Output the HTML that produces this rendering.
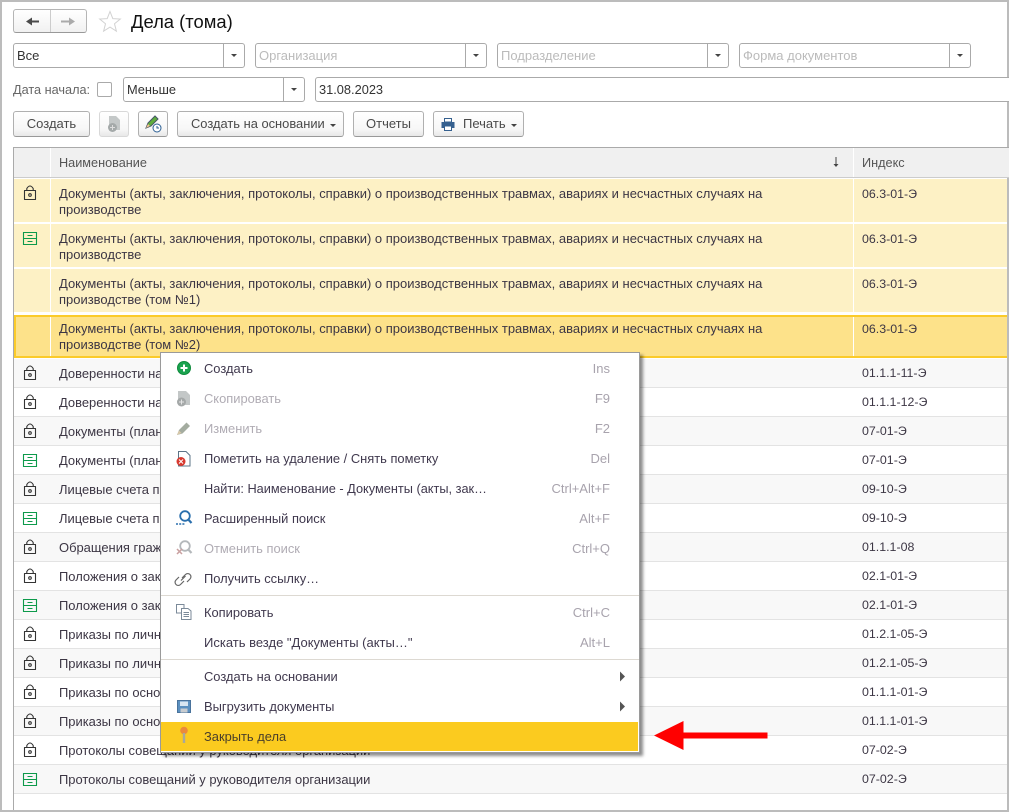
<!DOCTYPE html>
<html><head><meta charset="utf-8"><style>
html,body{margin:0;padding:0;width:1009px;height:812px;overflow:hidden;background:#fff}
body{font:13px/15px "Liberation Sans",sans-serif;color:#3c3644;position:relative}
.a{position:absolute}
.t{position:absolute;white-space:nowrap}
.fld{position:absolute;height:25px;border:1px solid #aaa;border-radius:3px;box-sizing:border-box;background:#fff}
.fld span{position:absolute;left:3px;top:4px;white-space:nowrap;color:#333}
.fld span.ph{color:#bbb}
.fld i{position:absolute;right:0;top:0;bottom:0;width:20px;border-left:1px solid #aaa}
.fld i:after,.dd:after{content:"";position:absolute;left:7px;top:10px;border:3px solid transparent;border-top:3px solid #444;border-bottom:0}
.btn{position:absolute;top:111px;height:26px;box-sizing:border-box;border:1px solid #b0b0b0;border-bottom-color:#999;border-radius:3px;background:linear-gradient(#fff,#f7f7f7 70%,#e8e8e8);text-align:center;line-height:24px;color:#4a4a4a;white-space:nowrap}
.dd{position:relative;display:inline-block;width:6px;height:6px;margin-left:5px}
.dd:after{left:0;top:2px}
.r{position:absolute;left:14px;width:993px;border-bottom:1px solid #e3e3e3;box-sizing:content-box}
.r u{position:absolute;left:45px;top:7px;text-decoration:none;white-space:nowrap;color:#3c3644;font-size:12.95px}
.r b{position:absolute;left:848px;top:7px;font-weight:normal;white-space:nowrap;color:#3c3644;font-size:12.4px}
.y{background:#fdf1c5;border-bottom:0;height:43px}
.y:before,.y:after{content:"";position:absolute;top:0;bottom:0;width:1px;background:#fff}
.y:before{left:36px}.y:after{left:839px}
.y u,.y b{top:7px;line-height:16px}
.y u{font-size:12.99px}
.s:before{left:34px}.s:after{left:837px}
.odd{background:#f8f8f8}
.m{position:absolute;left:204px;white-space:nowrap;color:#40394e;font-size:12.9px}
.k{position:absolute;right:399px;white-space:nowrap;color:#a8a3ad}
.dis{color:#b0acb4}
</style></head><body>
<div class="a" style="left:0;top:0;width:1009px;height:2px;background:#bcbcbc"></div>
<div class="a" style="left:0;top:0;width:2px;height:812px;background:#bcbcbc"></div>
<div class="a" style="left:1007px;top:0;width:2px;height:812px;background:#bcbcbc"></div>
<div class="a" style="left:0;top:810px;width:1009px;height:2px;background:#bcbcbc"></div>

<div class="a" style="left:13px;top:9px;width:74px;height:24px;box-sizing:border-box;border:1px solid #b5b5b5;border-bottom-color:#999;border-radius:3px;background:linear-gradient(#fff,#f1f1f1)"><div class="a" style="left:36px;top:0;width:1px;height:22px;background:#ccc"></div></div>
<svg class="a" style="left:24px;top:14px" width="60" height="14"><path d="M4 7.500H15" stroke="#4a4a4a" stroke-width="2"/><path d="M2 7.500L8 3.500V11.500Z" fill="#4a4a4a"/><path d="M37 7.500H48" stroke="#aaa" stroke-width="2"/><path d="M51 7.500L45 3.500V11.500Z" fill="#aaa"/></svg>
<svg class="a" style="left:98px;top:10px" width="24" height="23"><path d="M12 1.500L14.800 8.600L22.300 9L16.500 13.800L18.400 21.200L12 17.100L5.600 21.200L7.500 13.800L1.700 9L9.200 8.600Z" fill="#fff" stroke="#d2d2d2"/></svg>
<div class="t" style="left:131px;top:11px;font-size:18.4px;line-height:22px;color:#111">Дела (тома)</div>

<div class="fld" style="left:13px;top:43px;width:232px"><span>Все</span><i></i></div>
<div class="fld" style="left:255px;top:43px;width:232px"><span class="ph">Организация</span><i></i></div>
<div class="fld" style="left:497px;top:43px;width:232px"><span class="ph">Подразделение</span><i></i></div>
<div class="fld" style="left:739px;top:43px;width:232px"><span class="ph">Форма документов</span><i></i></div>
<div class="t" style="left:13px;top:83px;color:#666;font-size:12.7px">Дата начала:</div>
<div class="a" style="left:97px;top:82px;width:15px;height:15px;box-sizing:border-box;border:1px solid #aaa;border-radius:2px"></div>
<div class="fld" style="left:123px;top:77px;width:182px"><span style="font-size:12.8px">Меньше</span><i></i></div>
<div class="fld" style="left:315px;top:77px;width:700px"><span style="font-size:12.8px">31.08.2023</span></div>

<div class="btn" style="left:13px;width:77px">Создать</div>
<div class="btn" style="left:99px;width:30px;border-color:#d8d8d8"></div>
<svg class="a" style="left:106px;top:115px" width="17" height="18"><path d="M3 1H10L14 5V15H3Z" fill="#c4c8c8"/><circle cx="6.500" cy="12.500" r="4.500" fill="#a4a9a9"/><path d="M4 12.500H9M6.500 10V15" stroke="#ddd"/></svg>
<div class="btn" style="left:138px;width:30px"></div>
<svg class="a" style="left:144px;top:115px" width="18" height="18"><path d="M2 13L4 8L11 1L14 4L7 11Z" fill="#5fae3d" stroke="#456"/><path d="M2 13L4 9L6 11Z" fill="#f2c48d"/><circle cx="13" cy="13" r="4" fill="#fff" stroke="#2c5f94"/><path d="M13 11V13H15" stroke="#2c5f94" fill="none"/></svg>
<div class="btn" style="left:177px;width:167px;text-align:left;padding-left:13px;font-size:12.9px">Создать на основании<span class="dd"></span></div>
<div class="btn" style="left:353px;width:71px">Отчеты</div>
<div class="btn" style="left:433px;width:91px;text-align:left;padding-left:29px">Печать<span class="dd"></span></div>
<svg class="a" style="left:441px;top:117px" width="15" height="15"><path d="M3.500 1.500H10.500V5H3.500Z" fill="#fff" stroke="#35608f"/><path d="M0.500 5H13.500V11H0.500Z" fill="#35608f"/><path d="M3.500 9H10.500V13.500H3.500Z" fill="#fff" stroke="#35608f"/></svg>

<div class="a" style="left:13px;top:147px;width:996px;height:31px;box-sizing:border-box;border-top:1px solid #aaa;border-bottom:1px solid #ccc;background:#f0f0f0"></div>
<div class="a" style="left:13px;top:147px;width:1px;height:663px;background:#aaa"></div>
<div class="a" style="left:50px;top:148px;width:1px;height:29px;background:#fff"></div>
<div class="a" style="left:853px;top:148px;width:1px;height:29px;background:#fff"></div>
<div class="t" style="left:59px;top:156px;color:#555;font-size:12.7px">Наименование</div>
<div class="t" style="left:862px;top:156px;color:#555;font-size:12.7px">Индекс</div>
<svg class="a" style="left:832px;top:157px" width="8" height="11"><path d="M4 0V9" stroke="#444"/><path d="M1.500 7L4 10L6.500 7Z" fill="#444"/></svg>

<div class="r y" style="top:179px"><u>Документы (акты, заключения, протоколы, справки) о производственных травмах, авариях и несчастных случаях на<br>производстве</u><b>06.3-01-Э</b></div>
<div class="r y" style="top:224px"><u>Документы (акты, заключения, протоколы, справки) о производственных травмах, авариях и несчастных случаях на<br>производстве</u><b>06.3-01-Э</b></div>
<div class="r y" style="top:269px"><u>Документы (акты, заключения, протоколы, справки) о производственных травмах, авариях и несчастных случаях на<br>производстве (том №1)</u><b>06.3-01-Э</b></div>
<div class="r y s" style="top:315px;height:43px;box-sizing:border-box;background:#fde28a;border:2px solid #fbcb2a;border-right:0"><u style="left:43px;top:4px">Документы (акты, заключения, протоколы, справки) о производственных травмах, авариях и несчастных случаях на<br>производстве (том №2)</u><b style="left:846px;top:4px">06.3-01-Э</b></div>

<div class="r" style="top:359px;height:28px;background:#f8f8f8"><u>Доверенности на</u><b>01.1.1-11-Э</b></div>
<div class="r" style="top:388px;height:28px"><u>Доверенности на</u><b>01.1.1-12-Э</b></div>
<div class="r odd" style="top:417px;height:28px"><u>Документы (план</u><b>07-01-Э</b></div>
<div class="r" style="top:446px;height:28px"><u>Документы (план</u><b>07-01-Э</b></div>
<div class="r odd" style="top:475px;height:28px"><u>Лицевые счета п</u><b>09-10-Э</b></div>
<div class="r" style="top:504px;height:28px"><u>Лицевые счета п</u><b>09-10-Э</b></div>
<div class="r odd" style="top:533px;height:28px"><u>Обращения граж</u><b>01.1.1-08</b></div>
<div class="r" style="top:562px;height:28px"><u>Положения о зак</u><b>02.1-01-Э</b></div>
<div class="r odd" style="top:591px;height:28px"><u>Положения о зак</u><b>02.1-01-Э</b></div>
<div class="r" style="top:620px;height:28px"><u>Приказы по личн</u><b>01.2.1-05-Э</b></div>
<div class="r odd" style="top:649px;height:28px"><u>Приказы по личн</u><b>01.2.1-05-Э</b></div>
<div class="r" style="top:678px;height:28px"><u>Приказы по осно</u><b>01.1.1-01-Э</b></div>
<div class="r odd" style="top:707px;height:28px"><u>Приказы по осно</u><b>01.1.1-01-Э</b></div>
<div class="r" style="top:736px;height:28px"><u>Протоколы совещаний у руководителя организации</u><b>07-02-Э</b></div>
<div class="r odd" style="top:765px;height:28px"><u>Протоколы совещаний у руководителя организации</u><b>07-02-Э</b></div>

<svg class="a" style="left:0;top:0;pointer-events:none" width="60" height="812" fill="none">
<g stroke="#333" stroke-width="1.100" stroke-linejoin="round">
<path d="M24.500 190.500H35.500V199.500H24.500ZM26.800 190.500V188.500Q30 183.500 33.200 188.500V190.500"/><circle cx="30" cy="195" r="1.300"/>
<path d="M24.500 370.500H35.500V379.500H24.500ZM26.800 370.500V368.500Q30 363.500 33.200 368.500V370.500"/><circle cx="30" cy="375" r="1.300"/>
<path d="M24.500 399.500H35.500V408.500H24.500ZM26.800 399.500V397.500Q30 392.500 33.200 397.500V399.500"/><circle cx="30" cy="404" r="1.300"/>
<path d="M24.500 428.500H35.500V437.500H24.500ZM26.800 428.500V426.500Q30 421.500 33.200 426.500V428.500"/><circle cx="30" cy="433" r="1.300"/>
<path d="M24.500 486.500H35.500V495.500H24.500ZM26.800 486.500V484.500Q30 479.500 33.200 484.500V486.500"/><circle cx="30" cy="491" r="1.300"/>
<path d="M24.500 544.500H35.500V553.500H24.500ZM26.800 544.500V542.500Q30 537.500 33.200 542.500V544.500"/><circle cx="30" cy="549" r="1.300"/>
<path d="M24.500 573.500H35.500V582.500H24.500ZM26.800 573.500V571.500Q30 566.500 33.200 571.500V573.500"/><circle cx="30" cy="578" r="1.300"/>
<path d="M24.500 631.500H35.500V640.500H24.500ZM26.800 631.500V629.500Q30 624.500 33.200 629.500V631.500"/><circle cx="30" cy="636" r="1.300"/>
<path d="M24.500 660.500H35.500V669.500H24.500ZM26.800 660.500V658.500Q30 653.500 33.200 658.500V660.500"/><circle cx="30" cy="665" r="1.300"/>
<path d="M24.500 689.500H35.500V698.500H24.500ZM26.800 689.500V687.500Q30 682.500 33.200 687.500V689.500"/><circle cx="30" cy="694" r="1.300"/>
<path d="M24.500 718.500H35.500V727.500H24.500ZM26.800 718.500V716.500Q30 711.500 33.200 716.500V718.500"/><circle cx="30" cy="723" r="1.300"/>
<path d="M24.500 747.500H35.500V756.500H24.500ZM26.800 747.500V745.500Q30 740.500 33.200 745.500V747.500"/><circle cx="30" cy="752" r="1.300"/>
</g>
<g stroke="#0d9a4b" stroke-width="1.100">
<path d="M23.500 232.500H36.500V244.500H23.500ZM23.500 238.500H36.500M27.500 235.500H32.500M27.500 241.500H32.500"/>
<path d="M23.500 454.500H36.500V466.500H23.500ZM23.500 460.500H36.500M27.500 457.500H32.500M27.500 463.500H32.500"/>
<path d="M23.500 512.500H36.500V524.500H23.500ZM23.500 518.500H36.500M27.500 515.500H32.500M27.500 521.500H32.500"/>
<path d="M23.500 599.500H36.500V611.500H23.500ZM23.500 605.500H36.500M27.500 602.500H32.500M27.500 608.500H32.500"/>
<path d="M23.500 773.500H36.500V785.500H23.500ZM23.500 779.500H36.500M27.500 776.500H32.500M27.500 782.500H32.500"/>
</g>
</svg>

<!-- Context menu -->
<div class="a" style="left:160px;top:352px;width:480px;height:401px;box-sizing:border-box;background:#fff;border:1px solid #9a9a9a;box-shadow:3px 3px 3px rgba(0,0,0,.45)"></div>
<div class="a" style="left:161px;top:595px;width:478px;height:1px;background:#ddd9d2"></div>
<div class="a" style="left:161px;top:659px;width:478px;height:1px;background:#ddd9d2"></div>
<div class="a" style="left:161px;top:722px;width:477px;height:29px;background:#fbcb1f"></div>

<div class="m" style="top:361px">Создать</div><div class="k" style="top:361px">Ins</div>
<div class="m dis" style="top:391px">Скопировать</div><div class="k" style="top:391px">F9</div>
<div class="m dis" style="top:421px">Изменить</div><div class="k" style="top:421px">F2</div>
<div class="m" style="top:451px">Пометить на удаление / Снять пометку</div><div class="k" style="top:451px">Del</div>
<div class="m" style="top:481px;font-size:12.75px">Найти: Наименование - Документы (акты, зак…</div><div class="k" style="top:481px">Ctrl+Alt+F</div>
<div class="m" style="top:511px">Расширенный поиск</div><div class="k" style="top:511px">Alt+F</div>
<div class="m dis" style="top:541px">Отменить поиск</div><div class="k" style="top:541px">Ctrl+Q</div>
<div class="m" style="top:571px">Получить ссылку…</div>
<div class="m" style="top:605px">Копировать</div><div class="k" style="top:605px">Ctrl+C</div>
<div class="m" style="top:635px;font-size:13px">Искать везде "Документы (акты…"</div><div class="k" style="top:635px">Alt+L</div>
<div class="m" style="top:669px">Создать на основании</div>
<div class="m" style="top:699px">Выгрузить документы</div>
<div class="m" style="top:729px;color:#4a3f2a">Закрыть дела</div>

<svg class="a" style="left:170px;top:355px" width="30" height="395" fill="none">
<circle cx="14" cy="13" r="6.500" fill="#1aa34f" stroke="#0f8a3d"/><path d="M10.500 13H17.500M14 9.500V16.500" stroke="#fff" stroke-width="2"/>
<path d="M8 36H16L20 40V50H8Z" fill="#c3c7c7"/><circle cx="11.500" cy="47" r="4.500" fill="#a4a8a8"/><path d="M9 47H14M11.500 44.500V49.500" stroke="#e4e4e4"/>
<path d="M7 80L9 75L16.500 67.500L20 71L12.500 78.500Z" fill="#a4aca0"/><path d="M7 80L9 75.500L11.500 78Z" fill="#d8c8a8"/>
<path d="M8.500 96.500H16L20 100.500V111H8.500Z" fill="#fff" stroke="#5d7487"/><circle cx="11" cy="106.500" r="4.500" fill="#d8392f"/><path d="M9 104.500L13 108.500M13 104.500L9 108.500" stroke="#fff"/>
<circle cx="15" cy="161" r="4.800" stroke="#2a6fad" stroke-width="1.800"/><path d="M18.300 164.500L21.500 168" stroke="#2a6fad" stroke-width="2.200"/><path d="M6 169H15" stroke="#2a6fad" stroke-width="1.600" stroke-dasharray="2 1.200"/>
<circle cx="15" cy="191" r="4.800" stroke="#b4b8bb" stroke-width="1.800"/><path d="M18.300 194.500L21.500 198" stroke="#b4b8bb" stroke-width="2.200"/><path d="M7 194L12 199M12 194L7 199" stroke="#c9a0a0" stroke-width="1.500"/>
<path d="M12 223L15.500 219.500A3 3 0 0 1 20 224L17 227M14 226L10.500 229.500A3 3 0 0 1 6 225L9 222" stroke="#666" stroke-width="1.200"/><path d="M11 225.500L15.500 221" stroke="#666" stroke-width="1.200"/>
<path d="M6.500 249.500H14V258H6.500Z" fill="#fff" stroke="#7b8a99"/><path d="M11.500 253.500H18L21 256V264.500H11.500Z" fill="#fff" stroke="#7b8a99"/><path d="M13.500 257.500H19M13.500 259.500H19M13.500 261.500H19" stroke="#7b8a99"/>
<path d="M7.500 345.500H20.500V357.500H7.500Z" fill="#5b90c0" stroke="#4a739c"/><path d="M10 346.500H18V351H10Z" fill="#d8e6f2"/><path d="M10.500 353.500H17.500V357.500H10.500Z" fill="#c8ccd0"/>
<circle cx="14" cy="375.500" r="3.800" fill="#ec8a3a"/><path d="M12.800 378H15.200V388H12.800Z" fill="#a8a89a"/>
</svg>
<svg class="a" style="left:619px;top:671px" width="8" height="42"><path d="M1 0.500L6 5.500L1 10.500Z" fill="#555"/><path d="M1 30.500L6 35.500L1 40.500Z" fill="#555"/></svg>

<svg class="a" style="left:650px;top:718px" width="122" height="34"><path d="M4 17.500L33.500 3V14.500H117.500V20.500H33.500V32Z" fill="#f00"/></svg>
</body></html>
